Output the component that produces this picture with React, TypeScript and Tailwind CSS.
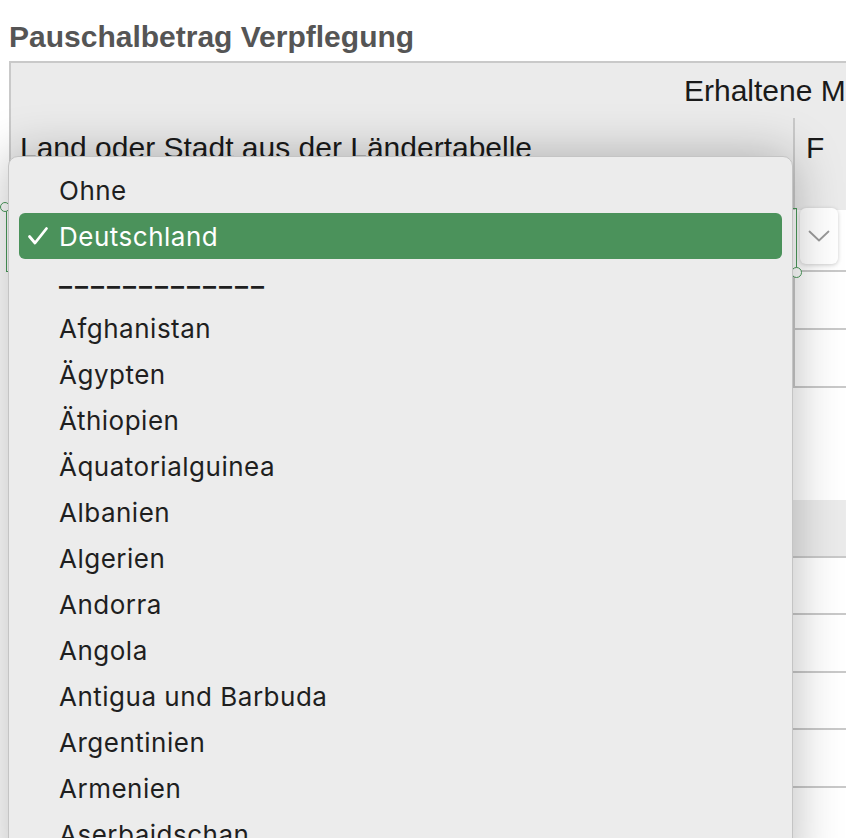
const countries = [
  "Afghanistan",
  "Ägypten",
  "Äthiopien",
  "Äquatorialguinea",
  "Albanien",
  "Algerien",
  "Andorra",
  "Angola",
  "Antigua und Barbuda",
  "Argentinien",
  "Armenien",
  "Aserbaidschan",
];

function Row({ h, gray, line = false }: { h: string; gray?: boolean; line?: boolean }) {
  return (
    <div className={`flex border-b-2 border-[#c9c9c9] ${h} ${gray ? "bg-[#ebebeb]" : "bg-white"}`}>
      <div className="w-[782px] shrink-0" />
      <div className={`flex-1 ${line ? "border-l-2 border-[#c9c9c9]" : ""}`} />
    </div>
  );
}

function Popup() {
  return (
    <div className="absolute left-[8px] top-[156px] w-[785px] h-[720px] rounded-t-[10px] border border-[#c4c4c4] bg-[#ececec] pt-[10px] shadow-[0_0_50px_rgba(0,0,0,0.28)] font-['Inter',sans-serif] text-[26px] tracking-[0.5px] text-[#1f1f1f]">
      <div className="h-[46px] flex items-center pl-[50px]">Ohne</div>
      <div className="h-[46px] mx-[10px] flex items-center rounded-[6px] bg-[#4b925b] text-white">
        <span className="w-[40px] pl-[8px] flex items-center">
          <svg width="22" height="22" viewBox="0 0 22 22" fill="none">
            <path d="M2.5 11.5 L8 18 L19.5 3.5" stroke="white" strokeWidth="2.8" strokeLinecap="round" strokeLinejoin="round" />
          </svg>
        </span>
        <span>Deutschland</span>
      </div>
      <div className="h-[46px] flex items-center pl-[50px] pt-[6px] tracking-[3px] font-semibold">–––––––––––––</div>
      {countries.map((c) => (
        <div key={c} className="h-[46px] flex items-center pl-[50px]">
          {c}
        </div>
      ))}
    </div>
  );
}

export default function App() {
  return (
    <div className="relative w-[846px] h-[838px] overflow-hidden bg-white font-['Liberation_Sans',Arial,sans-serif]">
      <h1 className="pl-[9px] pt-[20px] h-[61px] text-[30px] font-bold leading-[34px] text-[#555555] whitespace-nowrap">
        Pauschalbetrag Verpflegung
      </h1>
      <div className="ml-[9px] border-t-2 border-l-2 border-[#c9c9c9]">
        <div className="bg-[#ebebeb] text-[30px] text-[#1a1a1a]">
          <div className="h-[55px] pl-[673px] pt-[11px] leading-[34px] whitespace-nowrap">Erhaltene M</div>
          <div className="flex h-[92px]">
            <div className="w-[782px] shrink-0 pl-[9px] pt-[13px] leading-[34px] whitespace-nowrap">
              Land oder Stadt aus der Ländertabelle
            </div>
            <div className="flex-1 border-l-2 border-[#c9c9c9] pl-[11px] pt-[13px] leading-[34px]">F</div>
          </div>
        </div>
        <div className="flex h-[62px] border-b-2 border-[#c9c9c9] bg-white">
          <div className="relative w-[782px] shrink-0">
            <div className="absolute left-[-5px] top-[-2px] right-[-4px] bottom-[-2px] border-[1.5px] border-[#4a9a5a]" />
            <div className="absolute left-[-11px] top-[-8px] w-[10px] h-[10px] rounded-full border-[1.5px] border-[#4a9a5a] bg-white" />
            <div className="absolute right-[-9px] bottom-[-8px] w-[11px] h-[11px] rounded-full border-[1.5px] border-[#4a9a5a] bg-white" />
          </div>
          <div className="flex-1 pl-[7px]">
            <div className="-mt-[2px] w-[38px] h-[56px] flex items-center justify-center rounded-[6px] bg-white shadow-[0_1px_4px_rgba(0,0,0,0.2)]">
              <svg width="22" height="12" viewBox="0 0 22 12" fill="none">
                <path d="M1.5 1.5 L11 10.5 L20.5 1.5" stroke="#9a9a9a" strokeWidth="1.8" strokeLinecap="round" strokeLinejoin="round" />
              </svg>
            </div>
          </div>
        </div>
        <Row h="h-[58px]" line />
        <Row h="h-[58px]" line />
        <div className="h-[112px] bg-white" />
        <Row h="h-[58px]" gray />
        <Row h="h-[57px]" />
        <Row h="h-[58px]" />
        <Row h="h-[57px]" />
        <Row h="h-[58px]" />
      </div>
      <Popup />
    </div>
  );
}
